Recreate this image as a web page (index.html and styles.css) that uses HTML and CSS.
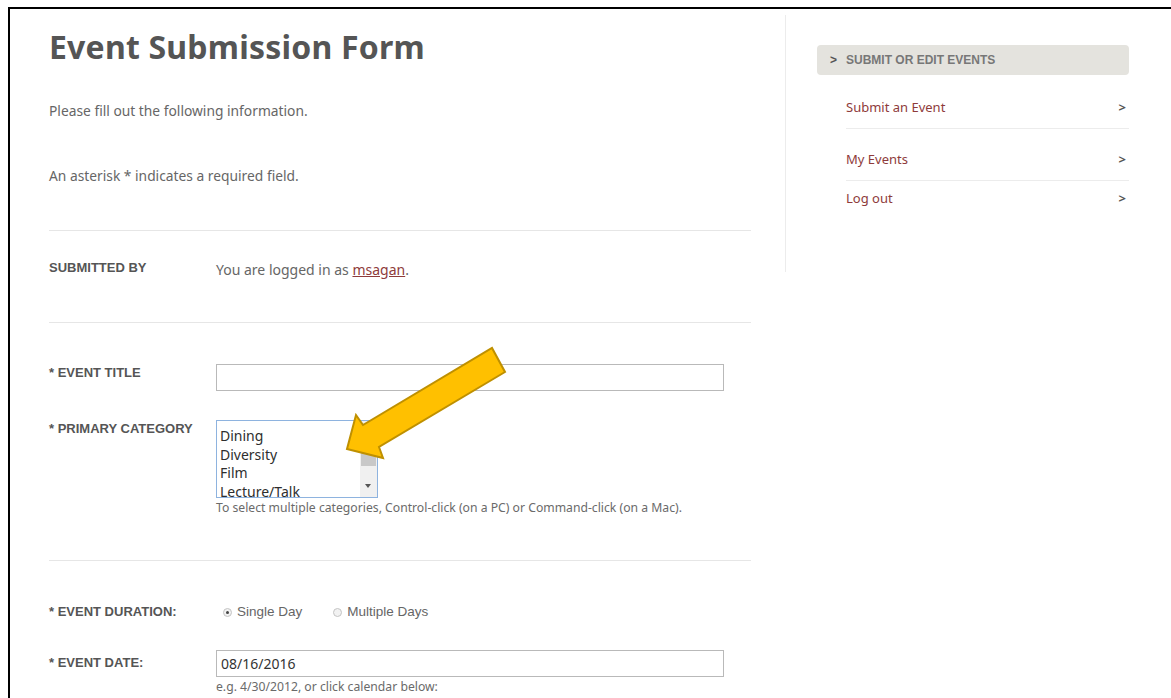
FILE: index.html
```html
<!DOCTYPE html>
<html lang="en">
<head>
<meta charset="utf-8">
<title>Event Submission Form</title>
<link rel="stylesheet" href="styles.css">
</head>
<body>
<div class="frame">
  <main class="main">
    <h1 class="title">Event Submission Form</h1>
    <p class="intro">Please fill out the following information.</p>
    <p class="intro intro-note">An asterisk * indicates a required field.</p>
    <hr class="rule">
    <div class="row row-submitted">
      <div class="label">SUBMITTED BY</div>
      <div class="field text">You are logged in as <a class="user" href="#">msagan</a>.</div>
    </div>
    <hr class="rule rule-tight">
    <div class="row row-title">
      <div class="label">* EVENT TITLE</div>
      <div class="field"><input class="textbox" type="text"></div>
    </div>
    <div class="row row-category">
      <div class="label">* PRIMARY CATEGORY</div>
      <div class="field">
        <div class="listbox">
          <ul class="options">
            <li>Dining</li>
            <li>Diversity</li>
            <li>Film</li>
            <li>Lecture/Talk</li>
          </ul>
          <div class="scrollbar">
            <span class="thumb"></span>
            <span class="down"></span>
          </div>
        </div>
        <div class="hint">To select multiple categories, Control-click (on a PC) or Command-click (on a Mac).</div>
      </div>
    </div>
    <hr class="rule rule-low">
    <div class="row row-duration">
      <div class="label">* EVENT DURATION:</div>
      <div class="field radios">
        <label class="radio"><input type="radio" name="duration" checked><span>Single Day</span></label>
        <label class="radio"><input type="radio" name="duration"><span>Multiple Days</span></label>
      </div>
    </div>
    <div class="row row-date">
      <div class="label">* EVENT DATE:</div>
      <div class="field">
        <input class="textbox datebox" type="text" value="08/16/2016">
        <div class="hint hint-date">e.g. 4/30/2012, or click calendar below:</div>
      </div>
    </div>
  </main>
  <aside class="side">
    <div class="side-head"><span class="chev">&gt;</span>SUBMIT OR EDIT EVENTS</div>
    <ul class="side-nav">
      <li><a href="#">Submit an Event</a><span class="go">&gt;</span></li>
      <li><a href="#">My Events</a><span class="go">&gt;</span></li>
      <li><a href="#">Log out</a><span class="go">&gt;</span></li>
    </ul>
  </aside>
  <svg class="pointer" width="170" height="125" viewBox="0 0 170 125">
    <polygon points="7,109 16,75 23,85 152,8 165,32 39,107 43,118" fill="#ffc000" stroke="#bf9000" stroke-width="2" stroke-linejoin="miter"/>
  </svg>
</div>
</body>
</html>
```

FILE: styles.css
```css
html, body {
  margin: 0;
  padding: 0;
  background: #ffffff;
}

body {
  font-family: "Noto Sans", "DejaVu Sans", sans-serif;
  color: #5c5c5c;
  width: 1171px;
  height: 698px;
  overflow: hidden;
}

.frame {
  position: relative;
  margin: 7px 0 0 8px;
  border-top: 2px solid #000;
  border-left: 2px solid #000;
  height: 700px;
  display: flex;
  align-items: flex-start;
}

.main {
  width: 702px;
  padding-left: 39px;
}

.title {
  margin: 16px 0 0 0;
  font-size: 32px;
  line-height: 44px;
  font-weight: bold;
  color: #555555;
  letter-spacing: 0.2px;
}

.intro {
  margin: 33px 0 0 0;
  font-size: 13.8px;
  line-height: 18px;
  color: #666;
}

.intro-note {
  margin-top: 47px;
}

.rule {
  border: 0;
  border-top: 1px solid #e6e6e6;
  margin: 45px 0 0 0;
  height: 0;
}

.rule-tight {
  margin-top: 43px;
}

.row {
  display: flex;
  align-items: flex-start;
}

.label {
  width: 167px;
  flex: none;
  font-family: "Liberation Sans Narrow", "Liberation Sans", sans-serif;
  font-stretch: condensed;
  font-weight: bold;
  font-size: 13px;
  color: #555;
  line-height: 18px;
}

.field {
  flex: 1;
}

.text {
  font-size: 14px;
  line-height: 18px;
  color: #666;
}

.user {
  color: #8e3b3b;
  text-decoration: underline;
}

.row-submitted {
  margin-top: 28px;
}

.row-submitted .text {
  padding-top: 2px;
}

.row-title {
  margin-top: 41px;
}

.textbox {
  box-sizing: border-box;
  width: 508px;
  height: 27px;
  margin: 0;
  border: 1px solid #b9b9b9;
  background: #fff;
  padding: 0 4px;
  font-family: "Noto Sans", sans-serif;
  font-size: 14px;
  color: #333;
  outline: none;
  display: block;
}

.row-category {
  margin-top: 29px;
}

.listbox {
  box-sizing: border-box;
  width: 162px;
  height: 78px;
  margin-top: 0;
  border: 1px solid #8eb3df;
  position: relative;
  overflow: hidden;
  display: flex;
  background: #fff;
}

.options {
  list-style: none;
  margin: 0;
  padding: 6px 0 0 3px;
  flex: 1;
  font-family: "Noto Sans", sans-serif;
  font-size: 14px;
  line-height: 18.7px;
  color: #2e2e2e;
}

.scrollbar {
  width: 17px;
  flex: none;
  background: #f0f0f0;
  position: relative;
}

.thumb {
  position: absolute;
  left: 1px;
  right: 1px;
  top: 32px;
  height: 13px;
  background: #c8c8c8;
}

.down {
  position: absolute;
  left: 5px;
  bottom: 9px;
  width: 0;
  height: 0;
  border-left: 3.5px solid transparent;
  border-right: 3.5px solid transparent;
  border-top: 4px solid #555;
}

.hint {
  font-family: "Noto Sans", sans-serif;
  font-size: 12.2px;
  line-height: 14px;
  color: #6a6a6a;
  margin-top: 3px;
}

.rule-low {
  margin-top: 45px;
}

.row-duration {
  margin-top: 42px;
}

.radios {
  display: flex;
  gap: 31px;
  padding-left: 7px;
  font-family: "Liberation Sans Narrow", "Liberation Sans", sans-serif;
  font-stretch: condensed;
  font-size: 13.5px;
  line-height: 18px;
  color: #666;
}

.radio {
  display: flex;
  align-items: center;
  gap: 5px;
}

.radio input {
  appearance: none;
  -webkit-appearance: none;
  margin: 0;
  width: 9px;
  height: 9px;
  border-radius: 50%;
  border: 1px solid #c4c4c4;
  background: #f2f2f2;
  box-sizing: border-box;
  position: relative;
}

.radio input:checked::after {
  content: "";
  position: absolute;
  left: 2px;
  top: 2px;
  width: 3px;
  height: 3px;
  border-radius: 50%;
  background: #444;
}

.row-date {
  margin-top: 33px;
}

.datebox {
  padding-left: 4px;
  color: #333;
  margin-top: -4px;
}

.hint-date {
  margin-top: 3px;
}

.side {
  margin-left: 34px;
  border-left: 1px solid #ececec;
  margin-top: 6px;
  height: 257px;
  padding-left: 31px;
  width: 312px;
  flex: none;
}

.side-head {
  margin-top: 30px;
  height: 30px;
  box-sizing: border-box;
  background: #e4e3de;
  border-radius: 4px;
  display: flex;
  align-items: center;
  padding-left: 13px;
  font-family: "Liberation Sans Narrow", "Liberation Sans", sans-serif;
  font-stretch: condensed;
  font-weight: bold;
  font-size: 12px;
  color: #777;
}

.chev {
  margin-right: 9px;
  color: #555;
}

.side-nav {
  list-style: none;
  margin: 0;
  padding: 0 0 0 29px;
}

.side-nav li {
  display: flex;
  justify-content: space-between;
  align-items: center;
  border-bottom: 1px solid #ececec;
  font-size: 13px;
  line-height: 18px;
}

.side-nav li:nth-child(1) {
  padding: 23px 0 12px;
}

.side-nav li:nth-child(2) {
  padding: 21px 0 12px;
}

.side-nav li:nth-child(3) {
  padding: 8px 0 0;
  border-bottom: 0;
}

.side-nav a {
  color: #8e3b3b;
  text-decoration: none;
}

.go {
  color: #555;
  font-size: 13px;
  font-weight: bold;
  margin-right: 3px;
}

.pointer {
  position: absolute;
  left: 330px;
  top: 331px;
  overflow: visible;
}
```
